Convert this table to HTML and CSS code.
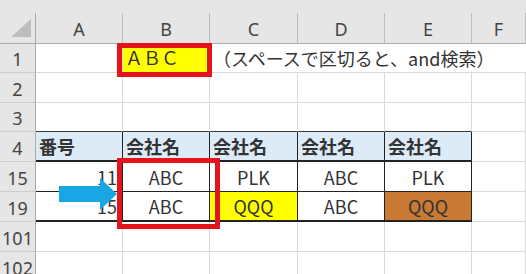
FILE: index.html
```html
<!DOCTYPE html>
<html lang="ja">
<head>
<meta charset="utf-8">
<title>検索シート</title>
<link rel="stylesheet" href="styles.css">
</head>
<body>
<div class="sheet">
  <div class="topbar"></div>
  <div class="grid">
    <!-- column headers -->
    <div class="corner"><span class="select-all"></span></div>
    <div class="ch">A</div>
    <div class="ch">B</div>
    <div class="ch">C</div>
    <div class="ch">D</div>
    <div class="ch">E</div>
    <div class="ch">F</div>

    <!-- row 1 -->
    <div class="rh">1</div>
    <div class="c"></div>
    <div class="c keyword">ＡＢＣ</div>
    <div class="c note">（スペースで区切ると、and検索）</div>

    <!-- row 2 -->
    <div class="rh">2</div>
    <div class="c"></div><div class="c"></div><div class="c"></div>
    <div class="c"></div><div class="c"></div><div class="c"></div>

    <!-- row 3 -->
    <div class="rh">3</div>
    <div class="c above"></div><div class="c above"></div><div class="c above"></div>
    <div class="c above"></div><div class="c above"></div><div class="c"></div>

    <!-- row 4: table head -->
    <div class="rh">4</div>
    <div class="c th">番号</div>
    <div class="c th">会社名</div>
    <div class="c th">会社名</div>
    <div class="c th">会社名</div>
    <div class="c th">会社名</div>
    <div class="c"></div>

    <!-- row 15 -->
    <div class="rh">15</div>
    <div class="c td num">11</div>
    <div class="c td">ABC</div>
    <div class="c td">PLK</div>
    <div class="c td">ABC</div>
    <div class="c td">PLK</div>
    <div class="c"></div>

    <!-- row 19 -->
    <div class="rh">19</div>
    <div class="c td last num">15</div>
    <div class="c td last">ABC</div>
    <div class="c td last fill-yellow">QQQ</div>
    <div class="c td last">ABC</div>
    <div class="c td last fill-orange">QQQ</div>
    <div class="c"></div>

    <!-- row 101 -->
    <div class="rh">101</div>
    <div class="c"></div><div class="c"></div><div class="c"></div>
    <div class="c"></div><div class="c"></div><div class="c"></div>

    <!-- row 102 -->
    <div class="rh">102</div>
    <div class="c"></div><div class="c"></div><div class="c"></div>
    <div class="c"></div><div class="c"></div><div class="c"></div>
  </div>

  <!-- callouts drawn over the grid -->
  <div class="callout callout-key"></div>
  <div class="callout callout-hits"></div>
  <svg class="pointer" width="60" height="34" viewBox="0 0 60 34" aria-hidden="true">
    <path d="M1 9 H42 V1 L59 17 L42 33 V25 H1 Z" fill="#19a6e4"/>
  </svg>
</div>
</body>
</html>
```

FILE: styles.css
```css
html, body {
  margin: 0;
  padding: 0;
  background: #ffffff;
  overflow: hidden;
}

.sheet {
  position: relative;
  width: 526px;
  height: 274px;
  overflow: hidden;
  font-family: "Noto Sans CJK JP", "Noto Sans", sans-serif;
  font-size: 18px;
  color: #333333;
}

.topbar {
  height: 13px;
  background: #e6e6e6;
}

.grid {
  display: grid;
  grid-template-columns: 36px 87px 87px 88px 87px 87px 54px;
  grid-template-rows: 31px 29px 30px 29px 30px 30px 30px 30px 30px;
}

.grid > div {
  box-sizing: border-box;
  display: flex;
  align-items: center;
  white-space: nowrap;
}

/* headers */
.corner {
  position: relative;
  background: #e6e6e6;
  border-right: 1px solid #ababab;
  border-bottom: 1px solid #ababab;
}

.select-all {
  position: absolute;
  right: 4px;
  bottom: 6px;
  width: 0;
  height: 0;
  border-left: 20px solid transparent;
  border-bottom: 18px solid #bdbdbd;
}

.ch {
  justify-content: center;
  background: #e6e6e6;
  border-right: 1px solid #bcbcbc;
  border-bottom: 1px solid #ababab;
  font-family: "Noto Sans", sans-serif;
  color: #444444;
  padding-top: 1px;
}

.rh {
  justify-content: center;
  background: #e6e6e6;
  border-right: 1px solid #ababab;
  border-bottom: 1px solid #cdcdcd;
  font-family: "Noto Sans", sans-serif;
  color: #444444;
  padding-top: 2px;
}

/* cells */
.c {
  border-right: 1px solid #d9d9d9;
  border-bottom: 1px solid #d9d9d9;
  padding: 0 3px;
}

.keyword {
  background: #ffff00;
  padding-left: 2px;
  padding-bottom: 3px;
}

.note {
  grid-column: span 4;
  border-right: none;
  overflow: visible;
}

.above {
  border-bottom-color: #3a3a3a;
}

.th {
  background: #ddebf7;
  font-weight: bold;
  border-right-color: #222222;
  border-bottom: 2px solid #222222;
}

.td {
  justify-content: center;
  border-right-color: #222222;
  border-bottom-color: #222222;
}

.td.num {
  justify-content: flex-end;
  padding-right: 5px;
}

.td.last {
  border-bottom: 2px solid #222222;
}

.fill-yellow {
  background: #ffff00;
}

.fill-orange {
  background: #c97a34;
}

/* red highlight frames and arrow */
.callout {
  position: absolute;
  box-sizing: border-box;
  border: 5px solid #e5131b;
}

.callout-key {
  left: 117px;
  top: 43px;
  width: 95px;
  height: 34px;
}

.callout-hits {
  left: 117px;
  top: 158px;
  width: 103px;
  height: 71px;
}

.pointer {
  position: absolute;
  left: 58px;
  top: 177px;
}
```
